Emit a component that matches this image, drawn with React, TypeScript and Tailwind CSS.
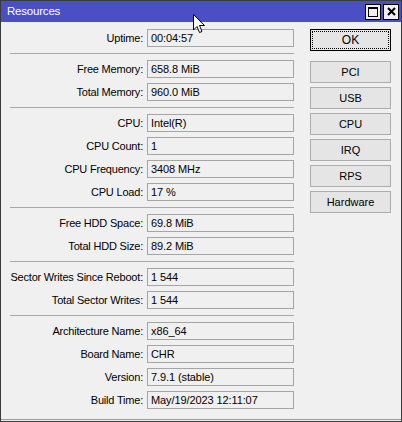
import React from 'react';

const groups: [string, string][][] = [
  [['Uptime', '00:04:57']],
  [
    ['Free Memory', '658.8 MiB'],
    ['Total Memory', '960.0 MiB'],
  ],
  [
    ['CPU', 'Intel(R)'],
    ['CPU Count', '1'],
    ['CPU Frequency', '3408 MHz'],
    ['CPU Load', '17 %'],
  ],
  [
    ['Free HDD Space', '69.8 MiB'],
    ['Total HDD Size', '89.2 MiB'],
  ],
  [
    ['Sector Writes Since Reboot', '1 544'],
    ['Total Sector Writes', '1 544'],
  ],
  [
    ['Architecture Name', 'x86_64'],
    ['Board Name', 'CHR'],
    ['Version', '7.9.1 (stable)'],
    ['Build Time', 'May/19/2023 12:11:07'],
  ],
];

const buttons = ['PCI', 'USB', 'CPU', 'IRQ', 'RPS', 'Hardware'];

const Row = ({ label, value }: { label: string; value: string }) => (
  <div className="flex items-center h-[18px]">
    <div className="w-[146px] text-right pr-[4px] whitespace-nowrap tracking-[-0.2px]">{label}:</div>
    <div className="w-[147px] h-[18px] border border-[#a5a5a5] bg-[#f0f0f0] pl-[3px] flex items-center whitespace-nowrap tracking-[-0.1px]">
      {value}
    </div>
  </div>
);

const Cursor = () => (
  <svg className="absolute left-[192px] top-[13px]" width="13" height="20" viewBox="0 0 13 20">
    <path
      d="M0.5 0.5 L0.5 16 L4 12.5 L6.5 18.5 L9 17.5 L6.5 11.5 L11.5 11.5 Z"
      fill="#fff"
      stroke="#000"
      strokeWidth="1"
      strokeLinejoin="round"
    />
  </svg>
);

const App = () => {
  return (
    <div
      className="relative w-[402px] h-[422px] border border-[#3a3a3a] bg-[#f0f0f0] flex flex-col text-[11px] text-black overflow-hidden"
      style={{ fontFamily: '"Liberation Sans", Arial, sans-serif' }}
    >
      {/* Title bar */}
      <div className="h-[21px] bg-[#4b4fc6] flex items-center justify-between pl-[6px] pr-[2px] shrink-0">
        <span className="text-white text-[11.5px] tracking-[-0.2px]">Resources</span>
        <div className="flex gap-[2px]">
          <div className="w-[16px] h-[16px] bg-[#f0f0f0] border border-black flex items-center justify-center">
            <div className="w-[10px] h-[10px] border border-black border-t-2" />
          </div>
          <div className="w-[16px] h-[16px] bg-[#f0f0f0] border border-black flex items-center justify-center">
            <svg width="9" height="9" viewBox="0 0 9 9">
              <path d="M1 1 L8 8 M8 1 L1 8" stroke="#000" strokeWidth="2" />
            </svg>
          </div>
        </div>
      </div>

      {/* Body */}
      <div className="flex flex-1 pt-[7px] border-b border-[#9a9a9a]">
        <div className="flex flex-col w-[293px]">
          {groups.map((g, gi) => (
            <React.Fragment key={gi}>
              {gi > 0 && <div className="ml-[9px] my-[6px] h-px bg-[#a8a8a8]" />}
              <div className="flex flex-col gap-[5px]">
                {g.map(([l, v]) => (
                  <Row key={l} label={l} value={v} />
                ))}
              </div>
            </React.Fragment>
          ))}
        </div>

        <div className="flex flex-col ml-[16px] w-[81px]">
          <button className="h-[22px] border border-black bg-[#e5e5e5] p-[1px] mb-[10px]">
            <div className="h-full border border-dotted border-black flex items-center justify-center text-[12px]">
              OK
            </div>
          </button>
          <div className="flex flex-col gap-[4px]">
            {buttons.map((b) => (
              <button
                key={b}
                className="h-[22px] border border-[#adadad] bg-[#e5e5e5] flex items-center justify-center text-[11px]"
              >
                {b}
              </button>
            ))}
          </div>
        </div>
      </div>
      <div className="h-px shrink-0" />

      <Cursor />
    </div>
  );
};

export default App;
